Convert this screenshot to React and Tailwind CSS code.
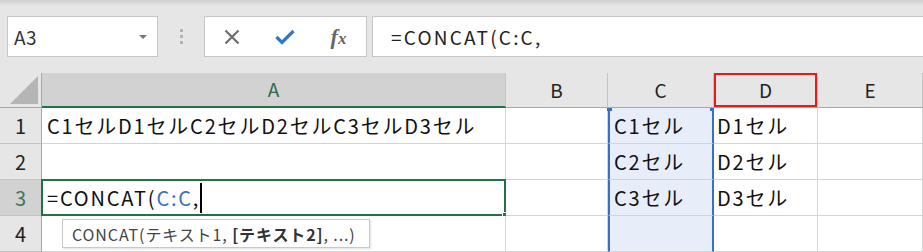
import React from 'react'

const font = { fontFamily: '"Noto Sans CJK JP", "Noto Sans", sans-serif' }

function Toolbar () {
  return (
    <div className="relative h-[73px] bg-gradient-to-b from-[#cfcfcf] via-[#e6e6e6] via-[8%] to-[#e6e6e6] flex items-start pt-[16px] pl-[7px]">
      <div className="w-[151px] h-[41px] bg-white border border-[#c6c6c6] flex items-center pl-[6px] pr-[10px]">
        <span className="text-[19px] text-[#333] leading-none flex-1 tracking-[0.5px]">A3</span>
        <span className="w-0 h-0 border-l-[4px] border-r-[4px] border-t-[4px] border-l-transparent border-r-transparent border-t-[#777]" />
      </div>
      <div className="w-[46px] h-[41px] flex flex-col items-center justify-center gap-[3px]">
        <span className="w-[3px] h-[3px] bg-[#b3b3b3]" />
        <span className="w-[3px] h-[3px] bg-[#b3b3b3]" />
        <span className="w-[3px] h-[3px] bg-[#b3b3b3]" />
      </div>
      <div className="w-[163px] h-[41px] bg-white border border-[#c6c6c6] flex items-center">
        <div className="w-[56px] flex justify-center">
          <svg width="16" height="16" viewBox="0 0 16 16">
            <path d="M1.5 1.5 L14.5 14.5 M14.5 1.5 L1.5 14.5" stroke="#6d6d6d" strokeWidth="2.2" fill="none" />
          </svg>
        </div>
        <div className="w-[52px] flex justify-center">
          <svg width="20" height="16" viewBox="0 0 20 16">
            <path d="M1.5 8 L7 13.5 L18.5 2" stroke="#2f78c2" strokeWidth="3.2" fill="none" strokeLinejoin="miter" />
          </svg>
        </div>
        <div className="w-[56px] flex justify-center">
          <span className="text-[22px] italic text-[#666] leading-none font-bold" style={{ fontFamily: '"Liberation Serif", serif' }}>
            f<span className="text-[17px]">x</span>
          </span>
        </div>
      </div>
      <div className="ml-[5px] flex-1 h-[41px] bg-white border border-[#c6c6c6] border-r-0 flex items-center pl-[18px]">
        <span className="text-[19px] text-[#222] leading-none tracking-[2.2px]">=CONCAT(C:C,</span>
      </div>
    </div>
  )
}

function HeaderCell ({ children, w, active, red }) {
  return (
    <div className={`relative ${w} h-full flex items-center justify-center border-r border-[#c4c4c4] text-[19px] ${active ? 'bg-[#d2d2d2] text-[#2f6b4d] border-b-2 border-b-[#217346]' : 'border-b border-b-[#a8a8a8] text-[#222]'}`}>
      {children}
      {red && <div className="absolute inset-0 border-2 border-[#e51c1c]" />}
    </div>
  )
}

function RowHead ({ n, active }) {
  return (
    <div className={`w-[42px] h-full flex items-center justify-center border-r border-b border-r-[#a8a8a8] border-b-[#c4c4c4] text-[20px] ${active ? 'bg-[#d2d2d2] text-[#3f7a5c]' : 'bg-[#e6e6e6] text-[#222]'}`}>
      {n}
    </div>
  )
}

function Cell ({ w, children, className = '' }) {
  return (
    <div className={`relative ${w} h-full flex items-center border-r border-b border-[#d4d4d4] bg-white text-[20px] tracking-[1.8px] text-[#111] whitespace-nowrap ${className}`}>
      {children}
    </div>
  )
}

function CCell ({ children, top }) {
  return (
    <div className="relative w-[106px] h-full flex items-center bg-[#e8eef9] border-l-2 border-r-2 border-l-[#3a6fc4] border-r-[#3a6fc4] border-b border-b-[#cfd3da] text-[20px] tracking-[1.8px] text-[#111] pl-[4px] whitespace-nowrap">
      {children}
      {top && <>
        <span className="absolute -left-[3px] top-0 w-[5px] h-[3px] bg-[#3a6fc4]" />
        <span className="absolute -right-[3px] top-0 w-[5px] h-[3px] bg-[#3a6fc4]" />
      </>}
    </div>
  )
}

export default function App () {
  return (
    <div className="w-[923px] h-[252px] overflow-hidden bg-[#e6e6e6] relative" style={font}>
      <Toolbar />
      <div className="flex h-[35px]">
        <div className="relative w-[42px] h-full border-r border-b border-[#a8a8a8]">
          <svg className="absolute right-[3px] bottom-[3px]" width="28" height="28" viewBox="0 0 28 28">
            <path d="M28 0 L28 28 L0 28 Z" fill="#b5b5b5" />
          </svg>
        </div>
        <HeaderCell w="w-[464px]" active>A</HeaderCell>
        <HeaderCell w="w-[102px]">B</HeaderCell>
        <HeaderCell w="w-[106px]">C</HeaderCell>
        <HeaderCell w="w-[104px]" red>D</HeaderCell>
        <HeaderCell w="flex-1">E</HeaderCell>
      </div>
      <div className="flex h-[36px]">
        <RowHead n="1" />
        <Cell w="w-[464px]" className="pl-[5px]">C1セルD1セルC2セルD2セルC3セルD3セル</Cell>
        <Cell w="w-[102px]" />
        <CCell top>C1セル</CCell>
        <Cell w="w-[104px]" className="pl-[3px]">D1セル</Cell>
        <Cell w="flex-1" />
      </div>
      <div className="flex h-[36px]">
        <RowHead n="2" />
        <Cell w="w-[464px]" />
        <Cell w="w-[102px]" />
        <CCell>C2セル</CCell>
        <Cell w="w-[104px]" className="pl-[3px]">D2セル</Cell>
        <Cell w="flex-1" />
      </div>
      <div className="flex h-[36px]">
        <RowHead n="3" active />
        <Cell w="w-[464px]" className="pl-[5px]">
          <span>=CONCAT(</span><span className="text-[#3a6fc4]">C:C</span><span>,</span>
          <span className="inline-block w-[1.5px] h-[30px] bg-black" />
          <div className="absolute -left-[1px] -top-[1px] -right-[1px] -bottom-[1px] border-2 border-[#217346]" />
          <span className="absolute -right-[3px] -bottom-[3px] w-[6px] h-[6px] bg-[#217346] border border-white" />
        </Cell>
        <Cell w="w-[102px]" />
        <CCell>C3セル</CCell>
        <Cell w="w-[104px]" className="pl-[3px]">D3セル</Cell>
        <Cell w="flex-1" />
      </div>
      <div className="flex h-[36px]">
        <RowHead n="4" />
        <Cell w="w-[464px]" />
        <Cell w="w-[102px]" />
        <CCell />
        <Cell w="w-[104px]" />
        <Cell w="flex-1" />
      </div>
      <div className="absolute left-[62px] top-[219px] h-[29px] w-[308px] px-[9px] flex items-center bg-white border border-[#c8c8c8] shadow-[1px_1px_2px_rgba(0,0,0,0.12)] text-[16px] tracking-[0.9px] text-[#444] whitespace-nowrap">
        CONCAT(テキスト1,&nbsp;<b className="font-bold text-[#333]">[テキスト2]</b>, ...)
      </div>
    </div>
  )
}
